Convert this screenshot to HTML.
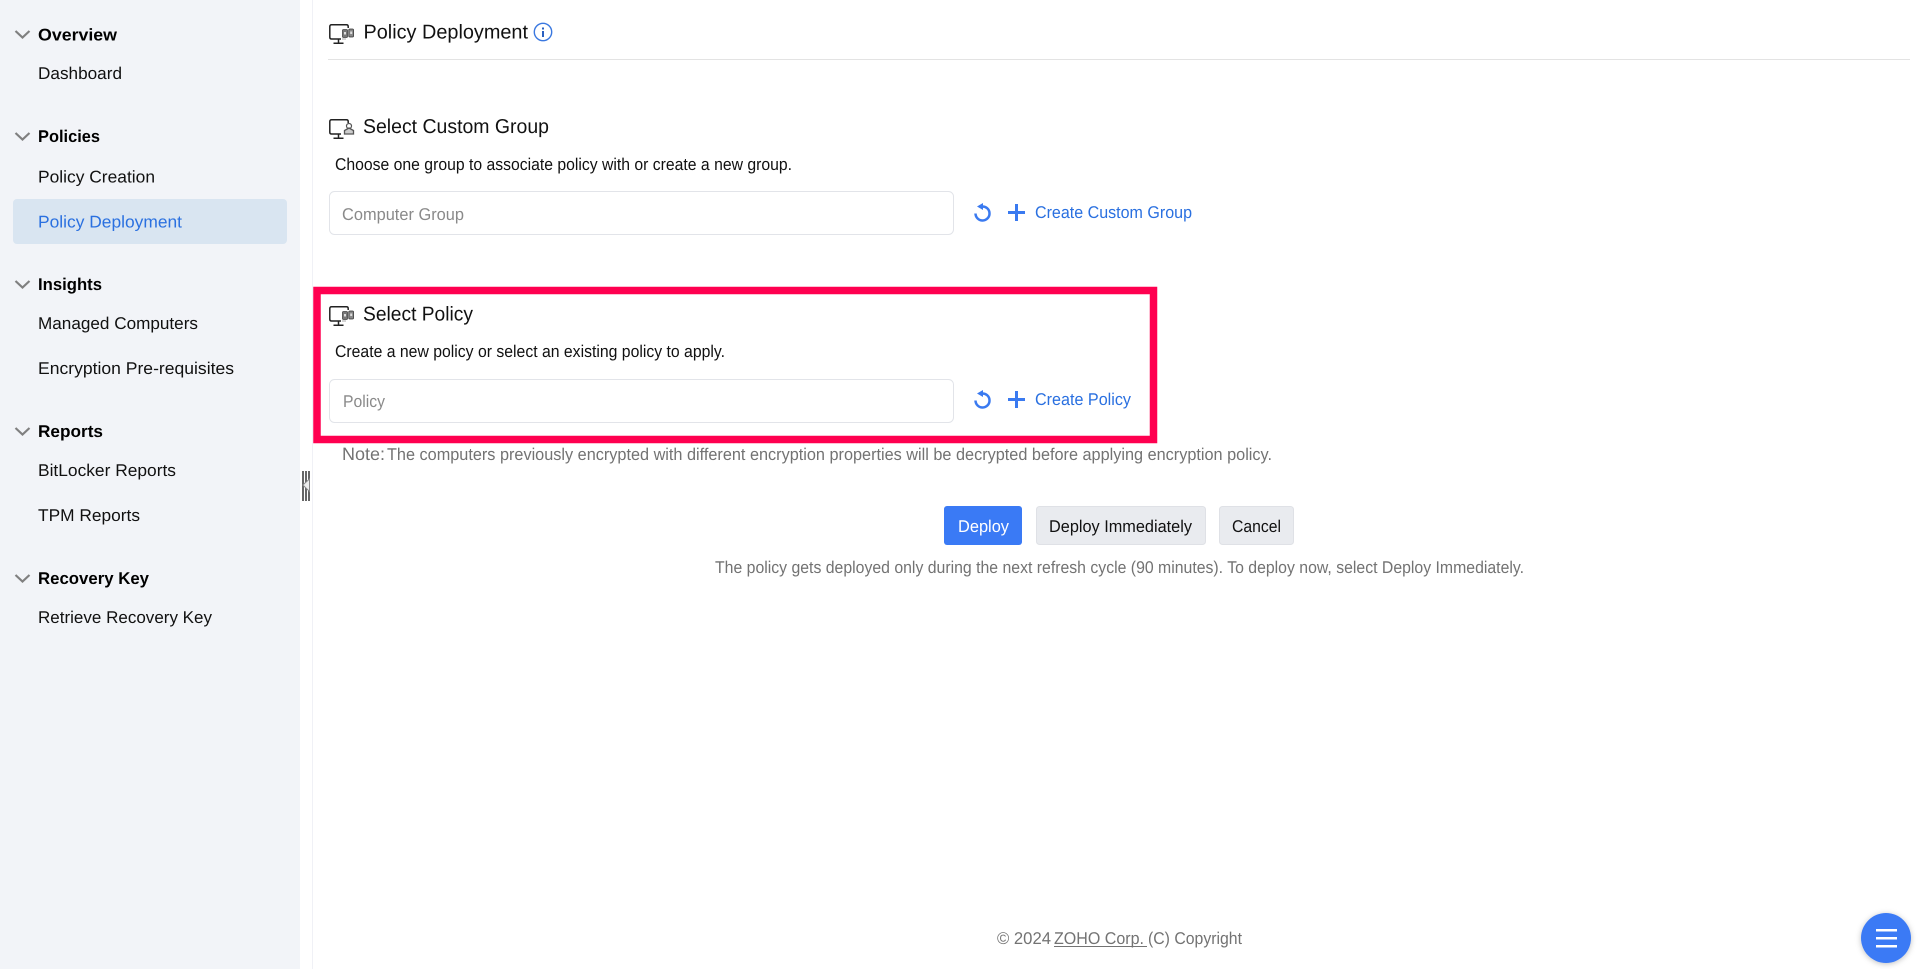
<!DOCTYPE html>
<html lang="en"><head><meta charset="utf-8"><title>Policy Deployment</title>
<style>
html,body{margin:0;padding:0;width:1919px;height:969px;overflow:hidden;background:#fff}
svg{display:block;position:absolute;left:0;top:0}
text{font-family:"Liberation Sans",sans-serif;font-size:17px;fill:#111}
.b{font-weight:700;fill:#000}
.g{fill:#737373}
.l{fill:#2a70e0}
.t{font-size:20px;fill:#111}
.ph{fill:#8a8a8a}
</style></head><body>
<svg width="1919" height="969" viewBox="0 0 1919 969" xmlns="http://www.w3.org/2000/svg" text-rendering="geometricPrecision">
<defs>
<g id="chev"><path d="M0 0L7 6.500L14 0" fill="none" stroke="#808080" stroke-width="2.200"/></g>
<g id="mon"><path d="M12 15H2.500Q0.800 15 0.800 13.300V2.500Q0.800 0.800 2.500 0.800H17.500Q19.200 0.800 19.200 2.500V4" fill="none" stroke="#222" stroke-width="1.500"/><path d="M9.500 15V19M4.500 19.300H14.500" fill="none" stroke="#222" stroke-width="1.500"/></g>
<g id="dev"><path d="M13 15H17" stroke="#aaa" fill="none"/><rect x="13.500" y="5.500" width="5" height="8" rx="1" fill="#777" stroke="#444" stroke-width=".8"/><rect x="19.800" y="5" width="4.700" height="8" rx="1" fill="#888" stroke="#333" stroke-width=".8"/><rect x="15" y="8" width="2" height="2.500" fill="#ddd"/><rect x="21.200" y="7.500" width="2" height="2.500" fill="#ddd"/></g>
<g id="rf"><path d="M-0.500 -7A7 7 0 1 1 -7 0" fill="none" stroke="#3a7af0" stroke-width="2.500"/><path d="M0.500 -10.500V-3.500L-5.500 -7Z" fill="#3a7af0"/></g>
<g id="pl"><path d="M-8.500 0H8.500M0 -8.500V8.500" stroke="#3a7af0" stroke-width="3" fill="none"/></g>
<filter id="sh" x="-30%" y="-30%" width="160%" height="160%"><feDropShadow dx="0" dy="1" stdDeviation="3" flood-color="#000" flood-opacity=".25"/></filter>
</defs>

<!-- sidebar -->
<rect x="0" y="0" width="300" height="969" fill="#f2f4f8"/>
<rect x="312" y="0" width="1" height="969" fill="#f0f1f6"/>
<rect x="13" y="199" width="274" height="45" rx="4" fill="#d9e5f1"/>

<use href="#chev" x="15.500" y="31"/>
<use href="#chev" x="15.500" y="133"/>
<use href="#chev" x="15.500" y="281"/>
<use href="#chev" x="15.500" y="428"/>
<use href="#chev" x="15.500" y="575"/>

<text class="b" x="38" y="40.500" textLength="79" lengthAdjust="spacingAndGlyphs">Overview</text>
<text x="38" y="79" textLength="84" lengthAdjust="spacingAndGlyphs">Dashboard</text>
<text class="b" x="38" y="142" textLength="62" lengthAdjust="spacingAndGlyphs">Policies</text>
<text x="38" y="182.500" textLength="117" lengthAdjust="spacingAndGlyphs">Policy Creation</text>
<text class="l" x="38" y="227.500" textLength="144" lengthAdjust="spacingAndGlyphs">Policy Deployment</text>
<text class="b" x="38" y="290" textLength="64" lengthAdjust="spacingAndGlyphs">Insights</text>
<text x="38" y="329" textLength="160" lengthAdjust="spacingAndGlyphs">Managed Computers</text>
<text x="38" y="374" textLength="196" lengthAdjust="spacingAndGlyphs">Encryption Pre-requisites</text>
<text class="b" x="38" y="437" textLength="65" lengthAdjust="spacingAndGlyphs">Reports</text>
<text x="38" y="476" textLength="138" lengthAdjust="spacingAndGlyphs">BitLocker Reports</text>
<text x="38" y="521" textLength="102" lengthAdjust="spacingAndGlyphs">TPM Reports</text>
<text class="b" x="38" y="584" textLength="111" lengthAdjust="spacingAndGlyphs">Recovery Key</text>
<text x="38" y="623" textLength="174" lengthAdjust="spacingAndGlyphs">Retrieve Recovery Key</text>

<!-- splitter -->
<rect x="302" y="471" width="2" height="30" fill="#666"/>
<rect x="305" y="471" width="2" height="30" fill="#666"/>
<rect x="308" y="471" width="2" height="30" fill="#666"/>
<path d="M302.800 485L309.500 479V491.500Z" fill="#eee" stroke="#888"/>

<!-- header -->
<use href="#mon" x="329" y="24"/><use href="#dev" x="329" y="24"/>
<text class="t" x="363.500" y="38.500" textLength="164.500" lengthAdjust="spacingAndGlyphs">Policy Deployment</text>
<circle cx="543" cy="32" r="8.700" fill="none" stroke="#3a78e0" stroke-width="1.400"/>
<rect x="542" y="31" width="2" height="6" fill="#2a60c0"/><rect x="542" y="27.500" width="2" height="2" fill="#2a60c0"/>
<rect x="328" y="59" width="1582" height="1" fill="#e3e3e3"/>

<!-- custom group -->
<use href="#mon" x="329" y="119"/>
<circle cx="349" cy="126" r="2.500" fill="none" stroke="#555" stroke-width="1.200"/>
<path d="M344.500 134V130.500L349 128L353.500 130.500V134Z" fill="#ccc" stroke="#555" stroke-width="1.300"/>
<text class="t" x="363" y="133" textLength="186" lengthAdjust="spacingAndGlyphs">Select Custom Group</text>
<text x="335" y="170" textLength="457" lengthAdjust="spacingAndGlyphs">Choose one group to associate policy with or create a new group.</text>
<rect x="329.500" y="191.500" width="624" height="43" rx="5" fill="#fff" stroke="#e2e4e9"/>
<text class="ph" x="342" y="220" textLength="122" lengthAdjust="spacingAndGlyphs">Computer Group</text>
<use href="#rf" x="982.500" y="213.500"/>
<use href="#pl" x="1016.500" y="212.500"/>
<text class="l" x="1035" y="218" textLength="157" lengthAdjust="spacingAndGlyphs">Create Custom Group</text>

<!-- highlight -->
<rect x="317" y="290.500" width="836.500" height="149" fill="none" stroke="#ff0050" stroke-width="7.500"/>

<!-- policy -->
<use href="#mon" x="329" y="306"/><use href="#dev" x="329" y="306"/>
<text class="t" x="363" y="320.500" textLength="110" lengthAdjust="spacingAndGlyphs">Select Policy</text>
<text x="335" y="357" textLength="390" lengthAdjust="spacingAndGlyphs">Create a new policy or select an existing policy to apply.</text>
<rect x="329.500" y="379.500" width="624" height="43" rx="5" fill="#fff" stroke="#e2e4e9"/>
<text class="ph" x="343" y="407" textLength="42" lengthAdjust="spacingAndGlyphs">Policy</text>
<use href="#rf" x="982.500" y="400.500"/>
<use href="#pl" x="1016.500" y="399.500"/>
<text class="l" x="1035" y="405" textLength="96" lengthAdjust="spacingAndGlyphs">Create Policy</text>

<!-- note -->
<text class="g" x="342" y="460" textLength="43" lengthAdjust="spacingAndGlyphs" style="font-size:18px">Note:</text>
<text class="g" x="387" y="460" textLength="885" lengthAdjust="spacingAndGlyphs">The computers previously encrypted with different encryption properties will be decrypted before applying encryption policy.</text>

<!-- buttons -->
<rect x="944" y="506" width="78" height="39" rx="3" fill="#3a7af5"/>
<text x="958" y="532" textLength="51" lengthAdjust="spacingAndGlyphs" style="fill:#fff">Deploy</text>
<rect x="1036.500" y="506.500" width="169" height="38" rx="3" fill="#e9ebef" stroke="#dfe1e6"/>
<text x="1049" y="532" textLength="143" lengthAdjust="spacingAndGlyphs">Deploy Immediately</text>
<rect x="1219.500" y="506.500" width="74" height="38" rx="3" fill="#e9ebef" stroke="#dfe1e6"/>
<text x="1232" y="532" textLength="49" lengthAdjust="spacingAndGlyphs">Cancel</text>
<text class="g" x="715" y="573" textLength="809" lengthAdjust="spacingAndGlyphs">The policy gets deployed only during the next refresh cycle (90 minutes). To deploy now, select Deploy Immediately.</text>

<!-- footer -->
<text class="g" x="997" y="944" textLength="54" lengthAdjust="spacingAndGlyphs">© 2024</text>
<text class="g" x="1054" y="944" textLength="90" lengthAdjust="spacingAndGlyphs">ZOHO Corp.</text>
<rect x="1054" y="946" width="93" height="1" fill="#737373"/>
<text class="g" x="1148" y="944" textLength="94" lengthAdjust="spacingAndGlyphs">(C) Copyright</text>

<!-- fab -->
<circle cx="1886" cy="938" r="25" fill="#3a7af5" filter="url(#sh)"/>
<rect x="1876" y="929" width="21" height="2.500" fill="#fff"/>
<rect x="1876" y="937" width="21" height="2.500" fill="#fff"/>
<rect x="1876" y="945" width="21" height="2.500" fill="#fff"/>
</svg>
</body></html>
